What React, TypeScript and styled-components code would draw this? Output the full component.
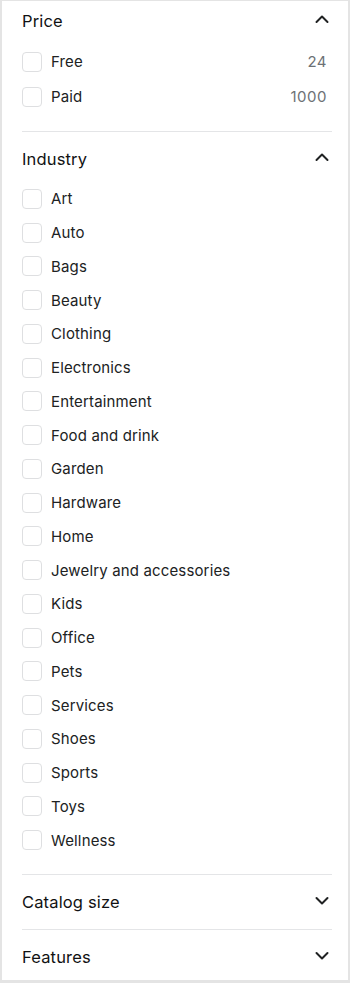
import React from "react";
import styled, { createGlobalStyle } from "styled-components";

const GlobalStyle = createGlobalStyle`
  html, body {
    margin: 0;
    padding: 0;
    background: #ffffff;
  }
  body {
    font-family: Inter, "Noto Sans", "Liberation Sans", sans-serif;
    color: #202223;
    -webkit-font-smoothing: antialiased;
  }
`;

const Frame = styled.div`
  box-sizing: border-box;
  width: 350px;
  height: 983px;
  border: 2px solid #e4e4e4;
  border-top-width: 1px;
  border-bottom-width: 3px;
  padding: 0 16px 0 20px;
  overflow: hidden;
  background: #fff;
`;

const Section = styled.section<{ $first?: boolean; $open?: boolean; $last?: boolean }>`
  padding-top: ${(p) => (p.$first ? "0" : "7px")};
  padding-bottom: ${(p) => (p.$open ? "17px" : p.$last ? "0" : "7px")};
  border-bottom: ${(p) => (p.$last ? "none" : "1px solid #e4e5e7")};
`;

const Header = styled.div`
  height: 40px;
  display: flex;
  align-items: center;
  justify-content: space-between;
`;

const Title = styled.h3`
  margin: 0;
  font-size: 16.5px;
  font-weight: 400;
  letter-spacing: 0.15px;
  color: #111213;
`;

const ChevronBox = styled.span`
  width: 20px;
  height: 20px;
  display: flex;
  align-items: center;
  justify-content: center;
  margin-top: -4px;
`;

const List = styled.ul<{ $row: number }>`
  list-style: none;
  margin: 3px 0 0;
  padding: 0;
  display: grid;
  grid-auto-rows: ${(p) => p.$row}px;
`;

const Item = styled.li`
  display: flex;
  align-items: center;
`;

const Box = styled.span`
  box-sizing: border-box;
  width: 20px;
  height: 20px;
  flex: none;
  border: 1px solid #dedfe1;
  border-radius: 4px;
  background: #fff;
  margin-right: 9px;
`;

const Label = styled.span`
  font-size: 15px;
  letter-spacing: 0.15px;
  color: #202223;
  flex: 1;
`;

const Count = styled.span`
  font-size: 15px;
  color: #6d7175;
  padding-right: 5px;
  letter-spacing: 0.5px;
`;

function Chevron({ up }: { up?: boolean }) {
  return (
    <ChevronBox>
      <svg width="20" height="20" viewBox="0 0 20 20" fill="none">
        <polyline
          points={up ? "4.5,13 10,7.5 15.5,13" : "4.5,8 10,13.5 15.5,8"}
          stroke="#202223"
          strokeWidth="2"
          strokeLinecap="round"
          strokeLinejoin="round"
        />
      </svg>
    </ChevronBox>
  );
}

const industries = [
  "Art",
  "Auto",
  "Bags",
  "Beauty",
  "Clothing",
  "Electronics",
  "Entertainment",
  "Food and drink",
  "Garden",
  "Hardware",
  "Home",
  "Jewelry and accessories",
  "Kids",
  "Office",
  "Pets",
  "Services",
  "Shoes",
  "Sports",
  "Toys",
  "Wellness",
];

export default function App(): JSX.Element {
  return (
    <>
      <GlobalStyle />
      <Frame>
        <Section $first $open>
          <Header>
            <Title>Price</Title>
            <Chevron up />
          </Header>
          <List $row={35}>
            <Item>
              <Box />
              <Label>Free</Label>
              <Count>24</Count>
            </Item>
            <Item>
              <Box />
              <Label>Paid</Label>
              <Count>1000</Count>
            </Item>
          </List>
        </Section>
        <Section $open>
          <Header>
            <Title>Industry</Title>
            <Chevron up />
          </Header>
          <List $row={33.75}>
            {industries.map((name) => (
              <Item key={name}>
                <Box />
                <Label>{name}</Label>
              </Item>
            ))}
          </List>
        </Section>
        <Section>
          <Header>
            <Title>Catalog size</Title>
            <Chevron />
          </Header>
        </Section>
        <Section $last>
          <Header>
            <Title>Features</Title>
            <Chevron />
          </Header>
        </Section>
      </Frame>
    </>
  );
}
